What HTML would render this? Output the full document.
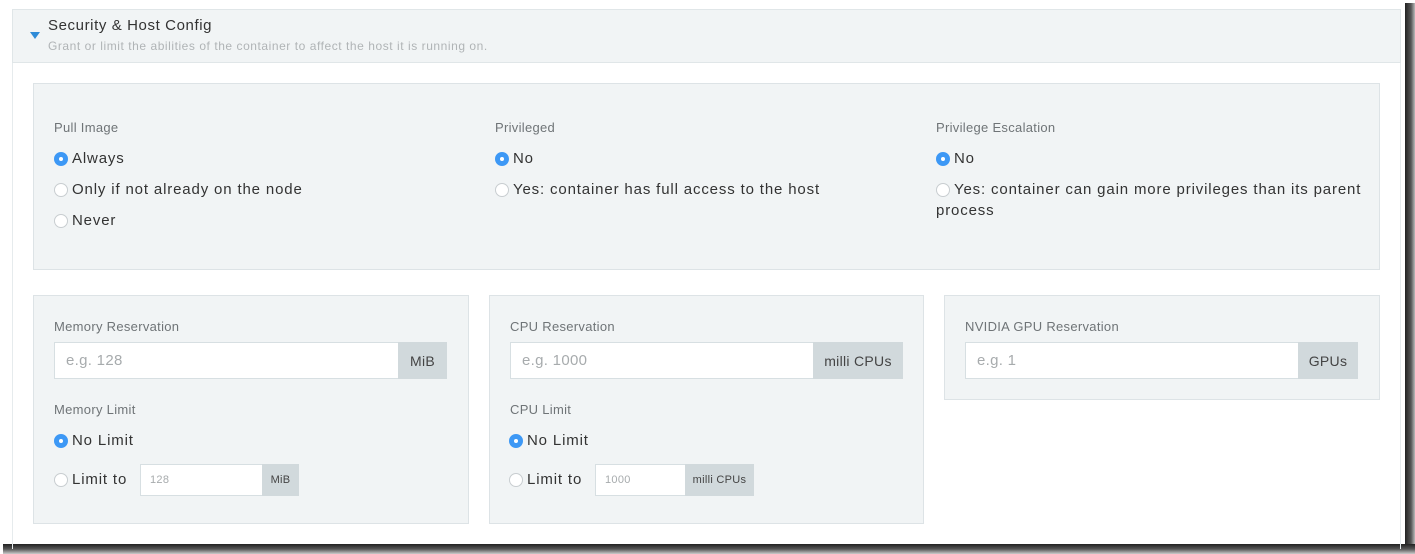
<!DOCTYPE html>
<html><head><meta charset="utf-8"><style>
*{box-sizing:border-box;margin:0;padding:0}
body{width:1415px;height:554px;background:#fff;position:relative;overflow:hidden;font-family:"Liberation Sans",sans-serif;color:#333}
.a{position:absolute;white-space:nowrap}
.box{position:absolute;background:#f1f4f5;border:1px solid #dde3e6}
.lbl{position:absolute;font-size:13px;color:#6f7477;letter-spacing:.3px;white-space:nowrap}
.r{position:absolute;font-size:15px;color:#333;letter-spacing:.85px;white-space:nowrap;line-height:18px}
.r i{position:absolute;left:-18px;top:2px;width:14px;height:14px;border-radius:50%;border:1px solid #c8cdd0;background:#fff}
.r i.on{background:#3d98f5;border-color:#3d98f5}
.r i.on:after{content:"";position:absolute;left:4px;top:4px;width:4px;height:4px;border-radius:50%;background:#fff}
.in{position:absolute;background:#fff;border:1px solid #d7dfe2;color:#a7abad;font-size:15px;padding-left:11px;display:flex;align-items:center;letter-spacing:.3px}
.ad{position:absolute;background:#d1d9dc;color:#444;font-size:14px;display:flex;align-items:center;justify-content:center;letter-spacing:.3px}
</style></head><body>
<div style="position:absolute;left:1405px;top:3px;width:10px;height:551px;background:linear-gradient(90deg,#222,#555 60%,#bbb)"></div>
<div style="position:absolute;left:3px;top:544px;width:1412px;height:10px;background:linear-gradient(180deg,#222,#555 50%,#ccc)"></div>
<div style="position:absolute;left:12px;top:9px;width:1389px;height:540px;border:1px solid #e6ebed;border-bottom:none"></div>
<div style="position:absolute;left:12px;top:9px;width:1389px;height:54px;background:#f1f4f5;border:1px solid #e0e6e8"></div>
<div class="a" style="left:30px;top:32px;width:0;height:0;border-left:5px solid transparent;border-right:5px solid transparent;border-top:7px solid #2f8bd7"></div>
<div class="a" style="left:48px;top:17px;font-size:15px;letter-spacing:.6px;color:#333">Security &amp; Host Config</div>
<div class="a" style="left:48px;top:39px;font-size:12px;letter-spacing:.55px;color:#b0b4b6">Grant or limit the abilities of the container to affect the host it is running on.</div>

<div class="box" style="left:33px;top:83px;width:1347px;height:187px"></div>
<div class="lbl" style="left:54px;top:120px">Pull Image</div>
<div class="r" style="left:72px;top:150px"><i class="on"></i>Always</div>
<div class="r" style="left:72px;top:181px"><i></i>Only if not already on the node</div>
<div class="r" style="left:72px;top:212px"><i></i>Never</div>
<div class="lbl" style="left:495px;top:120px">Privileged</div>
<div class="r" style="left:513px;top:150px"><i class="on"></i>No</div>
<div class="r" style="left:513px;top:181px"><i></i>Yes: container has full access to the host</div>
<div class="lbl" style="left:936px;top:120px">Privilege Escalation</div>
<div class="r" style="left:954px;top:150px"><i class="on"></i>No</div>
<div class="r" style="left:954px;top:181px"><i></i>Yes: container can gain more privileges than its parent</div>
<div class="r" style="left:936px;top:202px">process</div>

<div class="box" style="left:33px;top:295px;width:436px;height:229px"></div>
<div class="lbl" style="left:54px;top:319px">Memory Reservation</div>
<div class="in" style="left:54px;top:342px;width:345px;height:37px">e.g. 128</div>
<div class="ad" style="left:398px;top:342px;width:49px;height:37px">MiB</div>
<div class="lbl" style="left:54px;top:402px">Memory Limit</div>
<div class="r" style="left:72px;top:432px"><i class="on"></i>No Limit</div>
<div class="r" style="left:72px;top:471px"><i></i>Limit to</div>
<div class="in" style="left:140px;top:464px;width:123px;height:32px;font-size:11px;padding-left:9px">128</div>
<div class="ad" style="left:262px;top:464px;width:37px;height:32px;font-size:11px">MiB</div>

<div class="box" style="left:489px;top:295px;width:435px;height:229px"></div>
<div class="lbl" style="left:510px;top:319px">CPU Reservation</div>
<div class="in" style="left:510px;top:342px;width:304px;height:37px">e.g. 1000</div>
<div class="ad" style="left:813px;top:342px;width:90px;height:37px">milli CPUs</div>
<div class="lbl" style="left:510px;top:402px">CPU Limit</div>
<div class="r" style="left:527px;top:432px"><i class="on"></i>No Limit</div>
<div class="r" style="left:527px;top:471px"><i></i>Limit to</div>
<div class="in" style="left:595px;top:464px;width:91px;height:32px;font-size:11px;padding-left:9px">1000</div>
<div class="ad" style="left:685px;top:464px;width:69px;height:32px;font-size:11px">milli CPUs</div>

<div class="box" style="left:944px;top:295px;width:436px;height:105px"></div>
<div class="lbl" style="left:965px;top:319px">NVIDIA GPU Reservation</div>
<div class="in" style="left:965px;top:342px;width:334px;height:37px">e.g. 1</div>
<div class="ad" style="left:1298px;top:342px;width:60px;height:37px">GPUs</div>
</body></html>
